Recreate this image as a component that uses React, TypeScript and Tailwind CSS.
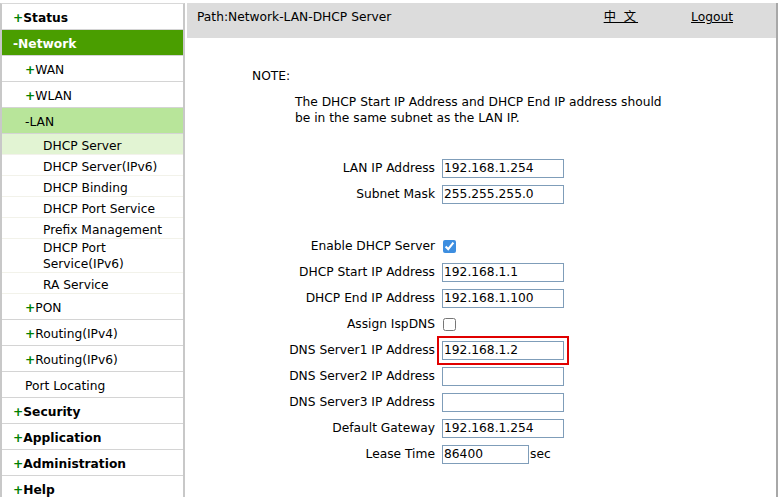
import React from "react";

const font = { fontFamily: '"DejaVu Sans", Verdana, "Noto Sans CJK SC", sans-serif' };

function Plus() {
  return <span className="text-[#008000] font-bold">+</span>;
}

function Top({ label, open, active }: { label: string; open?: boolean; active?: boolean }) {
  return (
    <div
      className={
        "h-[26px] flex items-center pt-[4px] pl-[11px] font-bold border-b border-[#d4d4d4] " +
        (active ? "bg-[#4a9e00] text-white" : "text-black")
      }
    >
      {open ? <span>-</span> : <Plus />}
      <span>{label}</span>
    </div>
  );
}

function Mid({ label, open, plain, active }: { label: string; open?: boolean; plain?: boolean; active?: boolean }) {
  return (
    <div
      className={
        "h-[26px] flex items-center pt-[3px] pl-[23px] border-b border-[#d4d4d4] " +
        (active ? "bg-[#b8e59a]" : "")
      }
    >
      {plain ? null : open ? <span>-</span> : <Plus />}
      <span>{label}</span>
    </div>
  );
}

function Sub({ label, active }: { label: React.ReactNode; active?: boolean }) {
  return (
    <div
      className={
        "h-[21px] flex items-center pt-[3px] pl-[41px] leading-4 border-b border-[#f2f2ea] " +
        (active ? "bg-[#e2f4d3]" : "")
      }
    >
      {label}
    </div>
  );
}

function Row({ label, children }: { label: string; children?: React.ReactNode }) {
  return (
    <div className="h-[26px] flex items-center">
      <div className="w-[255px] text-right pr-[7px]">{label}</div>
      <div className="flex items-center">{children}</div>
    </div>
  );
}

function Input({ value, w = "w-[122px]", red }: { value?: string; w?: string; red?: boolean }) {
  return (
    <input
      readOnly
      value={value ?? ""}
      className={
        "h-[19px] border border-[#7f9db9] bg-white px-[1px] text-[12.25px] text-black outline-none " +
        w +
        (red ? " outline-2 outline-solid outline-[#e00000] outline-offset-[3px]" : "")
      }
      style={font}
    />
  );
}

export default function App() {
  return (
    <div className="w-[778px] h-[497px] overflow-hidden bg-white text-[12.25px] text-black flex pt-[3px]" style={font}>
      <div className="w-[185px] shrink-0 border-l-2 border-t border-r-2 border-[#c8c8c8] border-t-[#d8d8d8] bg-white">
        <Top label="Status" />
        <Top label="Network" open active />
        <Mid label="WAN" />
        <Mid label="WLAN" />
        <Mid label="LAN" open active />
        <Sub label="DHCP Server" active />
        <Sub label="DHCP Server(IPv6)" />
        <Sub label="DHCP Binding" />
        <Sub label="DHCP Port Service" />
        <Sub label="Prefix Management" />
        <div className="pl-[41px] pt-[1px] leading-4 border-b border-[#f2f2ea]">
          DHCP Port
          <br />
          Service(IPv6)
        </div>
        <Sub label="RA Service" />
        <Mid label="PON" />
        <Mid label="Routing(IPv4)" />
        <Mid label="Routing(IPv6)" />
        <Mid label="Port Locating" plain />
        <Top label="Security" />
        <Top label="Application" />
        <Top label="Administration" />
        <Top label="Help" />
      </div>
      <div className="ml-[2px] flex-1 border-r-2 border-[#a8a8a8] flex flex-col">
        <div className="h-[35px] bg-[#dcdcdc] flex items-center pl-[10px] pb-[6px]">
          <span>Path:Network-LAN-DHCP Server</span>
          <span className="ml-auto underline tracking-[2px]">中 文</span>
          <span className="ml-[53px] mr-[43px] underline">Logout</span>
        </div>
        <div className="pl-[65px] pt-[29px]">NOTE:</div>
        <div className="pl-[108px] pt-[9px] w-[485px] leading-4">
          The DHCP Start IP Address and DHCP End IP address should be in the same subnet as the LAN IP.
        </div>
        <div className="pt-[29px]">
          <Row label="LAN IP Address">
            <Input value="192.168.1.254" />
          </Row>
          <Row label="Subnet Mask">
            <Input value="255.255.255.0" />
          </Row>
          <div className="h-[26px]" />
          <Row label="Enable DHCP Server">
            <input type="checkbox" readOnly checked className="w-[13px] h-[13px] ml-[1px] accent-[#3d8ee0]" />
          </Row>
          <Row label="DHCP Start IP Address">
            <Input value="192.168.1.1" />
          </Row>
          <Row label="DHCP End IP Address">
            <Input value="192.168.1.100" />
          </Row>
          <Row label="Assign IspDNS">
            <input type="checkbox" readOnly checked={false} className="w-[13px] h-[13px] ml-[1px]" />
          </Row>
          <Row label="DNS Server1 IP Address">
            <Input value="192.168.1.2" red />
          </Row>
          <Row label="DNS Server2 IP Address">
            <Input />
          </Row>
          <Row label="DNS Server3 IP Address">
            <Input />
          </Row>
          <Row label="Default Gateway">
            <Input value="192.168.1.254" />
          </Row>
          <Row label="Lease Time">
            <Input value="86400" w="w-[87px]" />
            <span className="ml-[1px]">sec</span>
          </Row>
        </div>
      </div>
    </div>
  );
}
